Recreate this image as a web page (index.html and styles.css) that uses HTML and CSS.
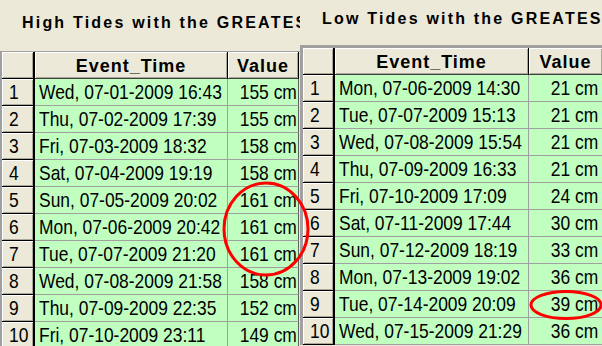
FILE: index.html
```html
<!DOCTYPE html>
<html>
<head>
<meta charset="utf-8">
<link rel="stylesheet" href="styles.css">
</head>
<body>
<div class="screen">
  <section class="panel panel-left">
    <h2 class="title title-left">High Tides with the GREATEST</h2>
    <div class="grid grid-left">
      <div class="row head"><div class="rh corner"></div><div class="ch c-time">Event_Time</div><div class="ch c-val">Value</div></div>
      <div class="row"><div class="rh"><span class="t">1</span></div><div class="cell c-time"><span class="t">Wed, 07-01-2009 16:43</span></div><div class="cell c-val"><span class="t">155 cm</span></div></div>
      <div class="row"><div class="rh"><span class="t">2</span></div><div class="cell c-time"><span class="t">Thu, 07-02-2009 17:39</span></div><div class="cell c-val"><span class="t">155 cm</span></div></div>
      <div class="row"><div class="rh"><span class="t">3</span></div><div class="cell c-time"><span class="t">Fri, 07-03-2009 18:32</span></div><div class="cell c-val"><span class="t">158 cm</span></div></div>
      <div class="row"><div class="rh"><span class="t">4</span></div><div class="cell c-time"><span class="t">Sat, 07-04-2009 19:19</span></div><div class="cell c-val"><span class="t">158 cm</span></div></div>
      <div class="row"><div class="rh"><span class="t">5</span></div><div class="cell c-time"><span class="t">Sun, 07-05-2009 20:02</span></div><div class="cell c-val"><span class="t">161 cm</span></div></div>
      <div class="row"><div class="rh"><span class="t">6</span></div><div class="cell c-time"><span class="t">Mon, 07-06-2009 20:42</span></div><div class="cell c-val"><span class="t">161 cm</span></div></div>
      <div class="row"><div class="rh"><span class="t">7</span></div><div class="cell c-time"><span class="t">Tue, 07-07-2009 21:20</span></div><div class="cell c-val"><span class="t">161 cm</span></div></div>
      <div class="row"><div class="rh"><span class="t">8</span></div><div class="cell c-time"><span class="t">Wed, 07-08-2009 21:58</span></div><div class="cell c-val"><span class="t">158 cm</span></div></div>
      <div class="row"><div class="rh"><span class="t">9</span></div><div class="cell c-time"><span class="t">Thu, 07-09-2009 22:35</span></div><div class="cell c-val"><span class="t">152 cm</span></div></div>
      <div class="row"><div class="rh"><span class="t">10</span></div><div class="cell c-time"><span class="t">Fri, 07-10-2009 23:11</span></div><div class="cell c-val"><span class="t">149 cm</span></div></div>
    </div>
  </section>
  <section class="panel panel-right">
    <h2 class="title title-right">Low Tides with the GREATEST</h2>
    <div class="grid grid-right">
      <div class="row head"><div class="rh corner"></div><div class="ch c-time">Event_Time</div><div class="ch c-val">Value</div></div>
      <div class="row"><div class="rh"><span class="t">1</span></div><div class="cell c-time"><span class="t">Mon, 07-06-2009 14:30</span></div><div class="cell c-val"><span class="t">21 cm</span></div></div>
      <div class="row"><div class="rh"><span class="t">2</span></div><div class="cell c-time"><span class="t">Tue, 07-07-2009 15:13</span></div><div class="cell c-val"><span class="t">21 cm</span></div></div>
      <div class="row"><div class="rh"><span class="t">3</span></div><div class="cell c-time"><span class="t">Wed, 07-08-2009 15:54</span></div><div class="cell c-val"><span class="t">21 cm</span></div></div>
      <div class="row"><div class="rh"><span class="t">4</span></div><div class="cell c-time"><span class="t">Thu, 07-09-2009 16:33</span></div><div class="cell c-val"><span class="t">21 cm</span></div></div>
      <div class="row"><div class="rh"><span class="t">5</span></div><div class="cell c-time"><span class="t">Fri, 07-10-2009 17:09</span></div><div class="cell c-val"><span class="t">24 cm</span></div></div>
      <div class="row"><div class="rh"><span class="t">6</span></div><div class="cell c-time"><span class="t">Sat, 07-11-2009 17:44</span></div><div class="cell c-val"><span class="t">30 cm</span></div></div>
      <div class="row"><div class="rh"><span class="t">7</span></div><div class="cell c-time"><span class="t">Sun, 07-12-2009 18:19</span></div><div class="cell c-val"><span class="t">33 cm</span></div></div>
      <div class="row"><div class="rh"><span class="t">8</span></div><div class="cell c-time"><span class="t">Mon, 07-13-2009 19:02</span></div><div class="cell c-val"><span class="t">36 cm</span></div></div>
      <div class="row"><div class="rh"><span class="t">9</span></div><div class="cell c-time"><span class="t">Tue, 07-14-2009 20:09</span></div><div class="cell c-val"><span class="t">39 cm</span></div></div>
      <div class="row"><div class="rh"><span class="t">10</span></div><div class="cell c-time"><span class="t">Wed, 07-15-2009 21:29</span></div><div class="cell c-val"><span class="t">36 cm</span></div></div>
    </div>
  </section>
  <svg class="marks" width="602" height="346" viewBox="0 0 602 346">
    <ellipse cx="266" cy="229" rx="42" ry="46" fill="none" stroke="#ff0000" stroke-width="3"/>
    <ellipse cx="566" cy="305" rx="35" ry="13.5" fill="none" stroke="#ff0000" stroke-width="3"/>
  </svg>
</div>
</body>
</html>
```
FILE: styles.css
```css
html, body {
  margin: 0;
  padding: 0;
  background: #ece9d8;
  overflow: hidden;
}
.screen {
  position: relative;
  width: 602px;
  height: 346px;
  display: flex;
  overflow: hidden;
  background: #ece9d8;
}
.panel {
  overflow: hidden;
  display: flex;
  flex-direction: column;
}
.panel-left {
  width: 300px;
  flex: none;
}
.panel-right {
  flex: 1;
  min-width: 0;
}
.title {
  margin: 0;
  box-sizing: border-box;
  font-family: "Liberation Sans", Arial, sans-serif;
  font-weight: bold;
  font-size: 16px;
  line-height: 20px;
  letter-spacing: 2.2px;
  color: #000;
  white-space: nowrap;
  padding-left: 22px;
  flex: none;
}
.title-left {
  height: 51px;
  padding-top: 13px;
}
.title-right {
  height: 45px;
  padding-top: 9px;
}
.grid {
  font-family: "Liberation Sans", Arial, sans-serif;
  font-size: 21px;
  color: #000;
}
.grid-left {
  border-top: 1px solid #a0a0a0;
  border-left: 2px solid #a0a0a0;
}
.grid-right {
  border-top: 3px solid #a0a0a0;
  border-left: 3px solid #a0a0a0;
}
.row {
  display: grid;
  height: 27px;
}
.grid-left .row {
  grid-template-columns: 33px 193px 71px;
}
.grid-right .row {
  grid-template-columns: 32px 194px 74px;
}
.row > div {
  box-sizing: border-box;
  white-space: nowrap;
  overflow: hidden;
  line-height: 26px;
}
.t {
  display: inline-block;
  transform: scaleX(0.83);
  transform-origin: 0 50%;
}
.c-val .t {
  transform-origin: 100% 50%;
}
.rh {
  background: #ece9d8;
  border-right: 2px solid #000;
  border-bottom: 1px solid #000;
  box-shadow: inset 1px 1px #fff, inset -1px -1px #aca899;
  padding-left: 7px;
}
.ch {
  background: #ece9d8;
  font-weight: bold;
  font-size: 18px;
  letter-spacing: 1px;
  text-align: center;
  padding-top: 1px;
  border-bottom: 1px solid #404040;
  box-shadow: inset 1px 1px #fff, inset -1px -1px #aca899;
}
.ch.c-time {
  border-right: 1px solid #000;
}
.ch.c-val {
  border-right: 1px solid #000;
}
.cell {
  background: #c0ffc0;
  border-bottom: 1px solid #a0a0a0;
}
.cell.c-time {
  border-right: 1px solid #a0a0a0;
  padding-left: 4px;
}
.cell.c-val {
  text-align: right;
  border-right: 1px solid #606060;
  padding-right: 2px;
}
.grid-right .cell.c-val {
  padding-right: 4px;
}
.marks {
  position: absolute;
  left: 0;
  top: 0;
  pointer-events: none;
}
```
